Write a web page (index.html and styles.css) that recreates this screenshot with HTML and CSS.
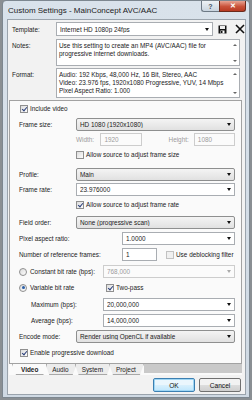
FILE: index.html
```html
<!DOCTYPE html>
<html lang="en">
<head>
  <meta charset="UTF-8" />
  <title>Custom Settings - MainConcept AVC/AAC</title>
  <link rel="stylesheet" href="styles.css">
</head>
<body>
  <div class="window">
    <div class="titlebar">
      <span class="title">Custom Settings - MainConcept AVC/AAC</span>
      <div class="caption-btns">
        <span class="cap-btn help">?</span>
        <span class="cap-btn close">&#10005;</span>
      </div>
    </div>

    <div class="client">
      <div class="head">
        <div class="head-row">
          <span class="head-label">Template:</span>
          <div class="field combo template-box"><span>Internet HD 1080p 24fps</span><i class="arrow"></i></div>
          <svg class="tool-icon" width="9" height="9" viewBox="0 0 9 9">
            <rect x="0.5" y="0.5" width="8" height="8" fill="#111"/>
            <rect x="2" y="1" width="5" height="3" fill="#eee"/>
            <rect x="2.5" y="5.5" width="4" height="3" fill="#fff"/>
            <rect x="3" y="6" width="1.5" height="2" fill="#111"/>
          </svg>
          <svg class="tool-icon close-icon" width="10" height="10" viewBox="0 0 10 10">
            <path d="M1 1 L9 9 M9 1 L1 9" stroke="#111" stroke-width="1.6"/>
          </svg>
        </div>
        <div class="head-row tall notes-row">
          <span class="head-label">Notes:</span>
          <div class="field memo notes">
            <p>Use this setting to create an MP4 (AVC/AAC) file for progressive internet downloads.</p>
            <div class="scroll"><i class="sc-up"></i><i class="sc-down"></i></div>
          </div>
        </div>
        <div class="head-row tall">
          <span class="head-label">Format:</span>
          <div class="field memo format">
            <p>Audio: 192 Kbps, 48,000 Hz, 16 Bit, Stereo, AAC<br>Video: 23.976 fps, 1920x1080 Progressive, YUV, 14 Mbps<br>Pixel Aspect Ratio: 1.000</p>
            <div class="scroll"><i class="sc-up"></i><i class="sc-down"></i></div>
          </div>
        </div>
      </div>

      <div class="panel">
        <label class="row check-row first"><i class="check on"></i>Include video</label>

        <div class="row m3">
          <span class="lbl">Frame size:</span>
          <div class="field list w-main"><span>HD 1080 (1920x1080)</span><i class="arrow"></i></div>
        </div>
        <div class="row sub">
          <span class="dim-lbl">Width:</span>
          <div class="field disabled small">1920</div>
          <span class="dim-lbl height">Height:</span>
          <div class="field disabled small">1080</div>
        </div>
        <label class="row sub"><i class="check"></i>Allow source to adjust frame size</label>

        <div class="row m7">
          <span class="lbl">Profile:</span>
          <div class="field list w-main"><span>Main</span><i class="arrow"></i></div>
        </div>
        <div class="row">
          <span class="lbl">Frame rate:</span>
          <div class="field combo w-main"><span>23.976000</span><i class="arrow"></i></div>
        </div>
        <label class="row sub"><i class="check on"></i>Allow source to adjust frame rate</label>

        <div class="row m5">
          <span class="lbl">Field order:</span>
          <div class="field list w-main"><span>None (progressive scan)</span><i class="arrow"></i></div>
        </div>
        <div class="row m3">
          <span class="lbl wide">Pixel aspect ratio:</span>
          <div class="field combo w-right"><span>1.0000</span><i class="arrow"></i></div>
        </div>
        <div class="row m3">
          <span class="lbl wide">Number of reference frames:</span>
          <div class="field refs">1</div>
          <label class="deblock"><i class="check disabled"></i>Use deblocking filter</label>
        </div>
        <div class="row m4">
          <label class="lbl radio-lbl"><i class="radio"></i>Constant bit rate (bps):</label>
          <div class="field disabled combo w-rate"><span>768,000</span><i class="arrow dim"></i></div>
        </div>
        <div class="row m3">
          <label class="lbl radio-lbl"><i class="radio on"></i>Variable bit rate</label>
          <label class="twopass"><i class="check on"></i>Two-pass</label>
        </div>
        <div class="row m4">
          <span class="lbl radio-lbl indent">Maximum (bps):</span>
          <div class="field combo w-rate"><span>20,000,000</span><i class="arrow"></i></div>
        </div>
        <div class="row m3">
          <span class="lbl radio-lbl indent">Average (bps):</span>
          <div class="field combo w-rate"><span>14,000,000</span><i class="arrow"></i></div>
        </div>
        <div class="row m3">
          <span class="lbl">Encode mode:</span>
          <div class="field list w-main"><span>Render using OpenCL if available</span><i class="arrow"></i></div>
        </div>
        <label class="row check-row m3"><i class="check on"></i>Enable progressive download</label>
      </div>

      <div class="tabs">
        <span class="tab active">Video</span>
        <span class="tab">Audio</span>
        <span class="tab">System</span>
        <span class="tab">Project</span>
        <span class="tab-fill"></span>
      </div>

      <div class="buttons">
        <button class="btn default">OK</button>
        <button class="btn">Cancel</button>
      </div>
    </div>
  </div>
</body>
</html>
```

FILE: styles.css
```css
* {
  box-sizing: border-box;
}

body {
  margin: 0;
  width: 252px;
  height: 400px;
  overflow: hidden;
  background: #8a8f93;
  font-family: "Liberation Sans", Arial, sans-serif;
  font-size: 6.4px;
  color: #1a1a1a;
}

.window {
  width: 248px;
  height: 398px;
  margin-left: 2px;
  background: linear-gradient(#d9e2eb, #cfd9e3);
  border: 1px solid #7d8790;
  border-radius: 4px 4px 0 0;
  display: flex;
  flex-direction: column;
  padding: 0 3px 2px 4px;
}

/* title bar */
.titlebar {
  height: 18px;
  display: flex;
  align-items: flex-start;
  justify-content: space-between;
}

.title {
  font-size: 8px;
  color: #1b1b1b;
  padding: 5px 0 0 1px;
}

.caption-btns {
  display: flex;
  margin-right: 0;
}

.cap-btn {
  height: 11px;
  display: flex;
  align-items: center;
  justify-content: center;
  font-size: 7px;
  font-weight: bold;
  border: 1px solid #6d7985;
  border-top: none;
}

.help {
  width: 18px;
  color: #40505f;
  background: linear-gradient(#eef2f6, #c9d4df);
  border-radius: 0 0 0 3px;
  border-right: none;
}

.close {
  width: 27px;
  color: #fff;
  background: linear-gradient(#e8a493, #c9523a 55%, #b83a22);
  border-color: #6b2a1c;
  border-radius: 0 0 3px 0;
}

/* client area */
.client {
  flex: 1;
  background: #f2f2f2;
  border: 1px solid #9aa3ac;
  display: flex;
  flex-direction: column;
  padding: 2px 0 0 1px;
}

.head {
  display: flex;
  flex-direction: column;
  gap: 2px;
  padding-left: 3px;
}

.head-row {
  display: flex;
  align-items: center;
  gap: 4px;
  height: 14px;
}

.head-row.notes-row {
  margin-top: 1px;
}

.head-row.tall {
  height: auto;
  align-items: flex-start;
}

.head-row.tall .head-label {
  padding-top: 3px;
}

.head-label {
  width: 40px;
  flex: none;
}

.field {
  height: 13px;
  background: #fff;
  border: 1px solid #a9adb2;
  display: flex;
  align-items: center;
  padding: 0 3px;
  position: relative;
}

.field span {
  flex: 1;
  white-space: nowrap;
  overflow: hidden;
}

.template-box {
  width: 157px;
  height: 14px;
}

.tool-icon {
  flex: none;
  margin-left: 1px;
}

.close-icon {
  margin-left: 4px;
}

.memo {
  width: 184px;
  padding: 2px 0 0 2px;
  align-items: flex-start;
}

.memo p {
  margin: 0;
  flex: 1;
  line-height: 8px;
}

.notes {
  height: 27px;
}

.format {
  height: 30px;
}

.scroll {
  width: 8px;
  align-self: stretch;
  margin-top: -2px;
  display: flex;
  flex-direction: column;
  justify-content: space-between;
  align-items: center;
  padding: 4px 0 3px;
}

.sc-up, .sc-down {
  width: 0;
  height: 0;
  border-left: 2px solid transparent;
  border-right: 2px solid transparent;
}

.sc-up {
  border-bottom: 2px solid #666;
}

.sc-down {
  border-top: 2px solid #666;
}

.arrow {
  width: 0;
  height: 0;
  border-left: 2.5px solid transparent;
  border-right: 2.5px solid transparent;
  border-top: 3px solid #111;
  flex: none;
  margin-left: 2px;
}

.arrow.dim {
  border-top-color: #aaa;
}

/* tab page */
.panel {
  margin: 2px 3px 0 0;
  flex: 1;
  background: #fafafa;
  border: 1px solid #a2a2a2;
  border-bottom: none;
  display: flex;
  flex-direction: column;
  padding: 1px 6px 0 9px;
}

.row {
  height: 13px;
  display: flex;
  align-items: center;
  margin-top: 2px;
  white-space: nowrap;
}

.row.first {
  margin-top: 0;
}

.row.m3 {
  margin-top: 3px;
}

.row.m4 {
  margin-top: 4px;
}

.row.m5 {
  margin-top: 5px;
}

.row.m7 {
  margin-top: 7px;
}

.row.sub {
  padding-left: 57px;
}

.lbl {
  width: 57px;
  flex: none;
  white-space: nowrap;
}

.lbl.wide {
  width: 103px;
}

.radio-lbl {
  width: 84px;
  display: flex;
  align-items: center;
}

.radio-lbl.indent {
  padding-left: 12px;
}

.w-main {
  width: 162px;
}

.w-right {
  width: 116px;
}

.w-rate {
  width: 135px;
}

.list {
  background: linear-gradient(#f4f4f4, #e1e1e1);
  border-color: #8e8f8f;
  border-radius: 2px;
}

.disabled {
  color: #9c9c9c;
  background: #fbfbfb;
  border-color: #cdcdcd;
}

.dim-lbl {
  color: #9c9c9c;
  width: 25px;
}

.dim-lbl.height {
  width: 26px;
  margin-left: 27px;
}

.small {
  width: 42px;
}

.refs {
  width: 35px;
}

.deblock {
  display: flex;
  align-items: center;
  margin-left: 9px;
}

.twopass {
  display: flex;
  align-items: center;
  margin-left: 3px;
}

.check {
  width: 8px;
  height: 8px;
  border: 1px solid #8f8f8f;
  background: linear-gradient(135deg, #dcdcdc, #fdfdfd);
  margin-right: 2px;
  flex: none;
  position: relative;
}

.check.on::after {
  content: "";
  position: absolute;
  left: 2px;
  top: 0;
  width: 2px;
  height: 4px;
  border: solid #2b3f7a;
  border-width: 0 1.2px 1.2px 0;
  transform: rotate(40deg);
}

.check.disabled {
  border-color: #c2c2c2;
  background: #f0f0f0;
}

.radio {
  width: 8px;
  height: 8px;
  border-radius: 50%;
  border: 1px solid #8f8f8f;
  background: linear-gradient(135deg, #dcdcdc, #fdfdfd);
  margin-right: 3px;
  flex: none;
  position: relative;
}

.radio.on::after {
  content: "";
  position: absolute;
  left: 1.5px;
  top: 1.5px;
  width: 3px;
  height: 3px;
  border-radius: 50%;
  background: #2a5fa8;
}

.check-row {
  padding-left: 1px;
}

/* bottom tabs */
.tabs {
  height: 12px;
  margin-right: 3px;
  display: flex;
  align-items: stretch;
  border-top: 1px solid #a2a2a2;
  padding-left: 5px;
  background: #fafafa;
}

.tab {
  padding: 0 7px 0 6px;
  display: flex;
  align-items: center;
  color: #222;
  background: #ececec;
  border: 1px solid #a8a8a8;
  border-top: none;
  margin-left: -2px;
  clip-path: polygon(0 0, 100% 0, calc(100% - 4px) 100%, 4px 100%);
}

.tab.active {
  background: #fafafa;
  font-weight: bold;
  z-index: 1;
  padding: 0 8px 0 8px;
}

.tab-fill {
  flex: 1;
  background: #c9c9c9;
  margin: 0 0 2px 0;
}

.buttons {
  display: flex;
  justify-content: flex-end;
  gap: 4px;
  padding: 3px 4px 2px 0;
}

.btn {
  width: 42px;
  height: 14px;
  font-family: inherit;
  font-size: 6.6px;
  color: #111;
  background: linear-gradient(#f2f2f2 50%, #dddddd 50%, #cfcfcf);
  border: 1px solid #707070;
  border-radius: 2px;
  padding: 0;
}

.btn.default {
  border-color: #3c7fb1;
  box-shadow: inset 0 0 0 1px #9fd6f4;
  background: linear-gradient(#eaf6fd 50%, #d9f0fc 50%, #bee6fd);
}
```
